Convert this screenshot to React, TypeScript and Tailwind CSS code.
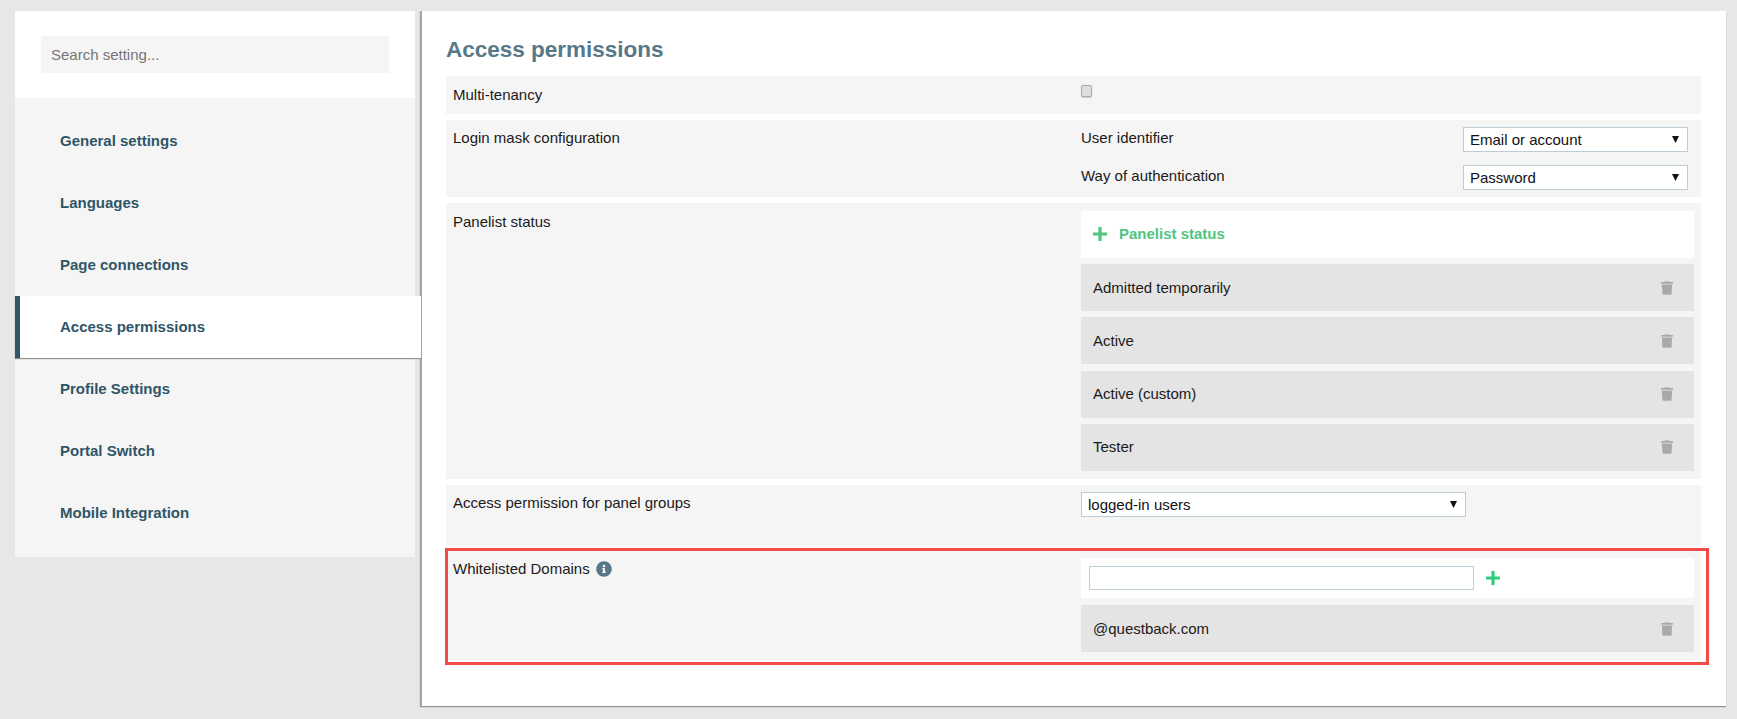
import { FaInfoCircle, FaTrash } from "react-icons/fa";

const nav = ["General settings", "Languages", "Page connections", "Access permissions", "Profile Settings", "Portal Switch", "Mobile Integration"];

function Plus({ className }: { className: string }) {
  return (
    <svg viewBox="0 0 14 14" className={className}>
      <path d="M5.4 0H8.6V5.4H14V8.6H8.6V14H5.4V8.6H0V5.4H5.4Z" fill="currentColor" />
    </svg>
  );
}

function Select({ value, width }: { value: string; width: string }) {
  return (
    <div className={`relative h-[25px] ${width}`}>
      <select defaultValue={value} className="h-full w-full appearance-none rounded-none border border-[#bccdd8] bg-white pl-[6px] text-[15px] text-[#111] outline-none">
        <option>{value}</option>
      </select>
      <svg viewBox="0 0 8 8" className="pointer-events-none absolute right-[9px] top-[9px] h-[7px] w-[7px]">
        <path d="M0 0H8L4 8Z" fill="#111" />
      </svg>
    </div>
  );
}

function Item({ text }: { text: string }) {
  return (
    <div className="flex h-[47px] items-center justify-between bg-[#e4e4e4] pl-[12px] pr-[21px] text-[#1a1a1a]">
      <span>{text}</span>
      <FaTrash className="h-[14px] w-[12px] text-[#a9a9a9]" />
    </div>
  );
}

export default function App() {
  return (
    <div className="flex h-[719px] overflow-hidden bg-[#e6e7e9] pl-[15px] pt-[11px] text-[15px] leading-[20px] text-[#1a1a1a] [font-family:'Liberation_Sans',Arial,sans-serif]">
      <aside className="w-[400px] self-start">
        <div className="flex h-[87px] items-start bg-white pl-[26px] pt-[25px]">
          <input
            placeholder="Search setting..."
            className="h-[37px] w-[348px] bg-[#f5f5f5] px-[10px] text-[15px] outline-none placeholder:text-[#757575]"
          />
        </div>
        <nav className="flex flex-col bg-[#f5f5f5] pb-[13px] pt-[12px]">
          {nav.map((n) =>
            n === "Access permissions" ? (
              <div key={n} className="relative z-10 -mr-[6px] flex h-[62px] items-center border-l-[5px] border-[#2f5668] bg-white pl-[40px] font-bold text-[#2f5668] shadow-[0_1px_1px_#8f9193]">
                {n}
              </div>
            ) : (
              <div key={n} className="flex h-[62px] items-center pl-[45px] font-bold text-[#2f5668]">
                {n}
              </div>
            )
          )}
        </nav>
      </aside>

      <main className="ml-[5px] h-[695px] w-[1306px] border-l-2 border-[#a3a5a7] bg-white pl-[24px] pr-[25px] shadow-[0_1px_1px_#8f9193]">
        <h1 className="mb-[13px] pt-[25px] text-[22.5px] font-bold leading-[27px] text-[#587889]">Access permissions</h1>

        <div className="flex h-[38px] bg-[#f5f5f5] pt-[9px]">
          <div className="w-[635px] pl-[7px]">Multi-tenancy</div>
          <input type="checkbox" className="h-[12px] w-[11px] appearance-none rounded-[2px] border border-[#a8a8a8] bg-[#dedede] shadow-[0_1px_1px_#ccc]" />
        </div>

        <div className="mt-[6px] flex h-[77px] bg-[#f5f5f5]">
          <div className="w-[635px] pl-[7px] pt-[8px]">Login mask configuration</div>
          <div className="flex w-[607px] flex-col gap-[13px] pt-[7px]">
            <div className="flex items-start justify-between">
              <span className="pt-px">User identifier</span>
              <Select value="Email or account" width="w-[225px]" />
            </div>
            <div className="flex items-start justify-between">
              <span className="pt-px">Way of authentication</span>
              <Select value="Password" width="w-[225px]" />
            </div>
          </div>
        </div>

        <div className="mt-[6px] flex h-[276px] bg-[#f5f5f5]">
          <div className="w-[635px] pl-[7px] pt-[9px]">Panelist status</div>
          <div className="flex w-[613px] flex-col pt-[8px]">
            <div className="flex h-[47px] items-center bg-white pl-[12px] font-bold text-[#4fc57f]">
              <Plus className="mr-[12px] h-[14px] w-[14px] -translate-y-px" />
              <span className="-translate-y-px">Panelist status</span>
            </div>
            <div className="mt-[6px] flex flex-col gap-[6.3px]">
              <Item text="Admitted temporarily" />
              <Item text="Active" />
              <Item text="Active (custom)" />
              <Item text="Tester" />
            </div>
          </div>
        </div>

        <div className="mt-[6px] flex h-[60px] bg-[#f5f5f5]">
          <div className="w-[635px] pl-[7px] pt-[8px]">Access permission for panel groups</div>
          <div className="pt-[7px]">
            <Select value="logged-in users" width="w-[385px]" />
          </div>
        </div>

        <div className="relative mt-[6px] flex h-[109px] bg-[#f5f5f5]">
          <div className="flex w-[635px] items-start gap-[6px] pl-[7px] pt-[8px]">
            Whitelisted Domains
            <FaInfoCircle className="mt-[2px] h-[16px] w-[16px] text-[#587889]" />
          </div>
          <div className="flex w-[613px] flex-col gap-[7px] pt-[7px]">
            <div className="flex h-[40px] items-center bg-white pl-[8px]">
              <input className="h-[24px] w-[385px] border border-[#bccdd8] bg-white outline-none" />
              <Plus className="ml-[12px] h-[14px] w-[14px] text-[#2ecf7c]" />
            </div>
            <Item text="@questback.com" />
          </div>
          <div className="pointer-events-none absolute -bottom-[5px] -left-px -right-[8px] -top-[3px] border-[3px] border-[#f04b45]" />
        </div>
      </main>
    </div>
  );
}
